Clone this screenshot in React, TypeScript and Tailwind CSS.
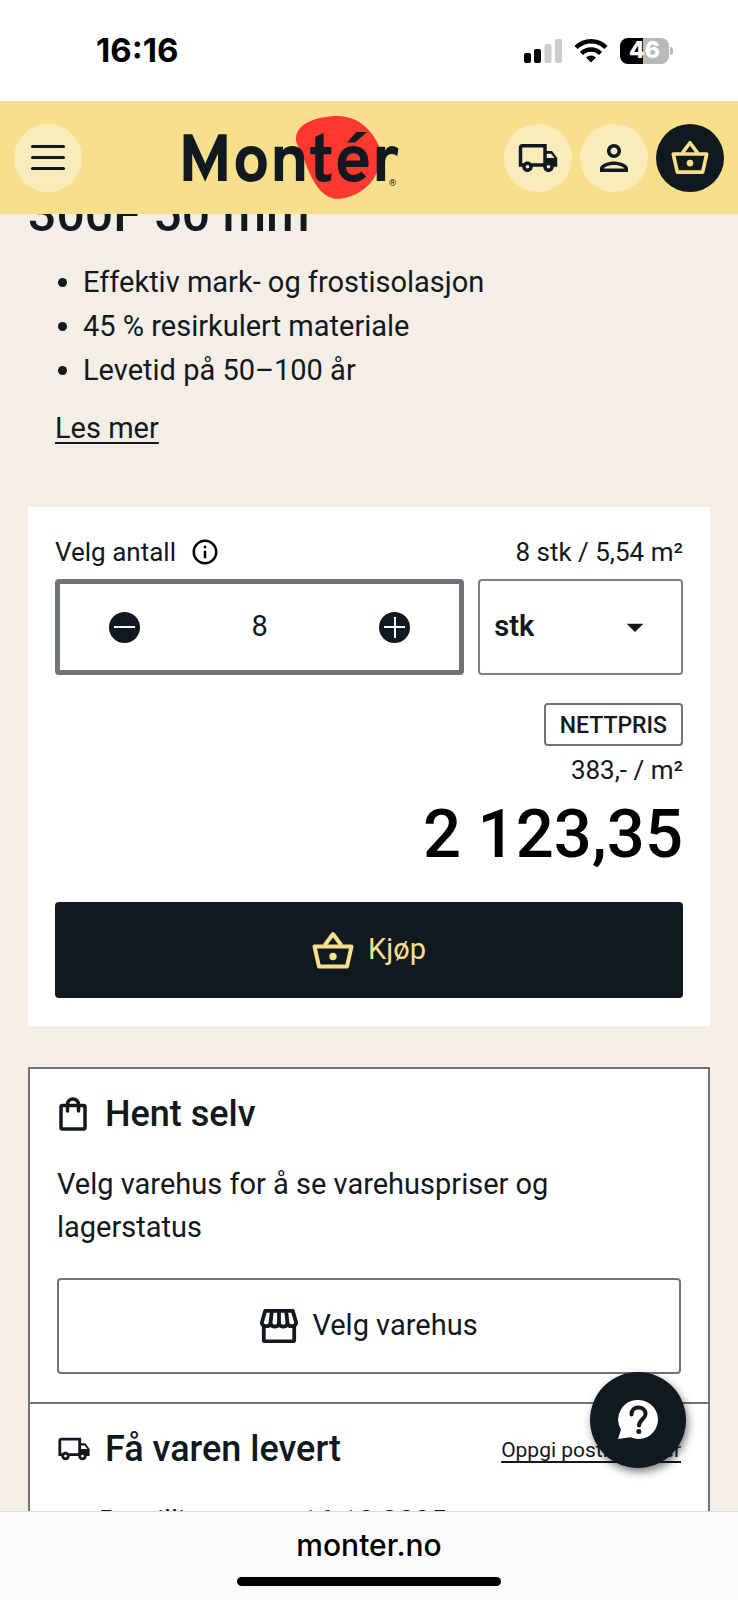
import React, { useState } from 'react';
import {
  MdOutlineLocalShipping,
  MdOutlinePerson,
  MdInfoOutline,
  MdArrowDropDown,
} from 'react-icons/md';

type IconProps = { className?: string };

function BasketIcon({ className }: IconProps) {
  return (
    <svg viewBox="0 0 42 38" fill="none" stroke="currentColor" strokeWidth="4" strokeLinejoin="round" className={className}>
      <path d="M2.5 15.5h37l-4.5 20h-28z" />
      <path d="M12.5 14.5L21 3l8.500 11.500" />
      <circle cx="21" cy="25.500" r="3.700" fill="currentColor" stroke="none" />
    </svg>
  );
}

function BagIcon({ className }: IconProps) {
  return (
    <svg viewBox="0 0 28 34" fill="none" stroke="currentColor" strokeWidth="3.500" strokeLinejoin="round" strokeLinecap="round" className={className}>
      <rect x="2" y="8.500" width="24" height="23.500" rx="1.500" />
      <path d="M8.500 14V7.500a5.500 5.500 0 0 1 11 0V14" />
    </svg>
  );
}

function StoreIcon({ className }: IconProps) {
  return (
    <svg viewBox="0 0 40 36" fill="none" stroke="currentColor" strokeWidth="4" strokeLinejoin="round" className={className}>
      <path d="M5.500 2h29l3.500 12c.5 4-7 6-9 1.500-1.500 4-7.500 4-9 0-1.500 4-7.500 4-9 0C9 20 1.500 18 2 14z" />
      <path d="M12.500 2L11 15M20 2v13M27.500 2L29 15" />
      <path d="M4 18v15a1 1 0 0 0 1 1h30a1 1 0 0 0 1-1V18" />
    </svg>
  );
}

function Logo() {
  return (
    <a href="#" aria-label="Montér" className="relative block w-[218px] pt-[14px]">
      <svg viewBox="0 0 218 84" className="absolute inset-x-0 top-0 w-full" aria-hidden="true">
        <path
          d="M118 21C120 6 141 0 160 0c20 0 34 14 41 30 5 13-2 34-15 43-9 7-25 13-35 8-14-7-22-28-27-44-3-6-7-10-6-16z"
          fill="#ff3830"
        />
      </svg>
      <span className="relative block font-[Overpass,'Open_Sans',sans-serif] text-[67px] leading-[70px] font-bold">
        Montér
      </span>
      <span className="absolute right-0 bottom-3 font-[Roboto,sans-serif] text-[9px] leading-none">®</span>
    </a>
  );
}

function StatusBar() {
  return (
    <div className="flex h-[101px] items-center justify-between bg-white pr-[65px] pl-24 font-[Inter,sans-serif] text-black">
      <span className="text-[33px] font-bold">16:16</span>
      <div className="flex items-center gap-3">
        <svg viewBox="0 0 38 24" className="h-6 w-[38px]">
          <rect x="0" y="14" width="7" height="10" rx="2" />
          <rect x="10" y="10" width="7" height="14" rx="2" />
          <rect x="20.500" y="5" width="7" height="19" rx="2" fill="#cccccc" />
          <rect x="31" y="0" width="7" height="24" rx="2" fill="#cccccc" />
        </svg>
        <svg viewBox="0 0 34 25" fill="none" stroke="#000" strokeWidth="4.500" className="h-[25px] w-[34px]">
          <path d="M2 9.500a21 21 0 0 1 30 0" />
          <path d="M7.500 15.500a13.500 13.500 0 0 1 19 0" />
          <path d="M17 24.500l-5-5a7.500 7.500 0 0 1 10 0z" fill="#000" stroke="none" />
        </svg>
        <div className="flex items-center gap-px">
          <div className="flex h-[26px] w-[49px] items-center justify-center rounded-lg bg-linear-to-r from-black from-46% to-[#b8b8b8] to-46% text-[23px] leading-none font-extrabold text-white">
            46
          </div>
          <div className="h-2 w-[3px] rounded-r-full bg-[#b8b8b8]" />
        </div>
      </div>
    </div>
  );
}

function Header() {
  return (
    <header className="flex h-[113px] items-center justify-between bg-[#f8df8b] px-[14px]">
      <button type="button" aria-label="Meny" className="flex size-[68px] flex-col items-center justify-center gap-2 rounded-full bg-[#faebbb]">
        <span className="h-[3px] w-[34px] rounded-full bg-[#101820]" />
        <span className="h-[3px] w-[34px] rounded-full bg-[#101820]" />
        <span className="h-[3px] w-[34px] rounded-full bg-[#101820]" />
      </button>
      <div className="ml-24 flex-1">
        <Logo />
      </div>
      <nav className="flex gap-2">
        <a href="#" aria-label="Levering" className="flex size-[68px] items-center justify-center rounded-full bg-[#faebbb]">
          <MdOutlineLocalShipping className="size-[42px]" />
        </a>
        <a href="#" aria-label="Min side" className="flex size-[68px] items-center justify-center rounded-full bg-[#faebbb]">
          <MdOutlinePerson className="size-[42px]" />
        </a>
        <a href="#" aria-label="Handlekurv" className="flex size-[68px] items-center justify-center rounded-full bg-[#101820] text-[#f8df8b]">
          <BasketIcon className="w-[38px]" />
        </a>
      </nav>
    </header>
  );
}

const features = [
  'Effektiv mark- og frostisolasjon',
  '45 % resirkulert materiale',
  'Levetid på 50–100 år',
];

function BuyBox() {
  const [amount, setAmount] = useState(8);

  return (
    <section className="mt-[57px] bg-white px-[27px] pt-6 pb-7">
      <div className="flex h-12 items-center justify-between pb-[6px] text-[26px]">
        <div className="flex items-center gap-[14px]">
          <label htmlFor="amount">Velg antall</label>
          <MdInfoOutline className="size-[30px] text-black" />
        </div>
        <span>8 stk / 5,54 m²</span>
      </div>

      <div className="grid grid-cols-[2fr_1fr] gap-[14px]">
        <div className="flex h-24 items-center justify-between rounded border-[5px] border-[#6f7479] px-[49px]">
          <button
            type="button"
            aria-label="Færre"
            onClick={() => setAmount((a) => Math.max(0, a - 1))}
            className="flex size-[31px] items-center justify-center rounded-full bg-[#101820]"
          >
            <span className="h-[2px] w-[21px] bg-white" />
          </button>
          <input
            id="amount"
            value={amount}
            onChange={(e) => setAmount(Number(e.target.value) || 0)}
            className="w-24 text-center text-[29px] outline-none"
          />
          <button
            type="button"
            aria-label="Flere"
            onClick={() => setAmount((a) => a + 1)}
            className="grid size-[31px] place-content-center place-items-center rounded-full bg-[#101820]"
          >
            <span className="col-start-1 row-start-1 h-[2px] w-[21px] bg-white" />
            <span className="col-start-1 row-start-1 h-[21px] w-[2px] bg-white" />
          </button>
        </div>
        <div className="relative">
          <select
            aria-label="Enhet"
            className="h-24 w-full appearance-none rounded border-2 border-[#7d8186] px-[14px] text-[29px] font-semibold outline-none"
          >
            <option>stk</option>
            <option>m²</option>
          </select>
          <MdArrowDropDown className="pointer-events-none absolute top-7 right-7 size-10" />
        </div>
      </div>

      <div className="mt-7 flex flex-col items-end">
        <span className="flex h-[43px] items-center rounded border-2 border-[#6f7479] px-[14px] pt-1 text-[23px] font-medium">
          NETTPRIS
        </span>
        <span className="text-[26px] leading-[48px]">383,- / m²</span>
        <span className="text-[67px] leading-[80px] font-medium text-black">2 123,35</span>
      </div>

      <button
        type="button"
        className="mt-7 flex h-24 w-full items-center justify-center gap-[14px] rounded bg-[#101820] text-[29px] text-[#f8df8b]"
      >
        <BasketIcon className="w-[42px]" />
        Kjøp
      </button>
    </section>
  );
}

function Delivery() {
  return (
    <section className="mt-[41px] border-2 border-[#6f7479] bg-white">
      <div className="border-b-2 border-[#6f7479] px-[27px] pt-5 pb-7">
        <h2 className="flex h-[50px] items-center gap-4 text-[36px] font-medium">
          <span className="flex w-8 justify-center">
            <BagIcon className="w-7" />
          </span>
          Hent selv
        </h2>
        <p className="mt-6 text-[29px] leading-[43px]">
          Velg varehus for å se varehuspriser og
          <br />
          lagerstatus
        </p>
        <button
          type="button"
          className="mt-[29px] flex h-24 w-full items-center justify-center gap-[14px] rounded border-2 border-[#6f7479] text-[29px]"
        >
          <StoreIcon className="w-[38px]" />
          Velg varehus
        </button>
      </div>

      <div className="px-[27px] pt-5">
        <div className="flex h-[50px] items-center justify-between">
          <h2 className="flex items-center gap-[14px] text-[36px] font-medium">
            <MdOutlineLocalShipping className="size-[34px]" />
            Få varen levert
          </h2>
          <a href="#" className="pt-1 text-[21px] underline underline-offset-4">
            Oppgi postnummer
          </a>
        </div>
        <p className="mt-[26px] pl-[42px] text-[29px] leading-[43px]">Bestillingsvare: 16.10.2025</p>
      </div>
    </section>
  );
}

export default function App() {
  return (
    <div className="flex h-screen flex-col overflow-hidden bg-[#f5eee7] font-[Roboto,sans-serif] text-[#101820]">
      <StatusBar />
      <Header />

      <main className="relative min-h-0 flex-1 overflow-hidden px-7">
        <h1 className="-mt-6 text-[50px] leading-[48px] font-medium">300F 50 mm</h1>
        <ul className="mt-[22px] list-disc pl-[55px] text-[29px] leading-[44px]">
          {features.map((feature) => (
            <li key={feature}>{feature}</li>
          ))}
        </ul>
        <a href="#" className="mt-[14px] ml-[27px] inline-block text-[29px] leading-[44px] underline underline-offset-4">
          Les mer
        </a>

        <BuyBox />
        <Delivery />

        <button
          type="button"
          aria-label="Hjelp"
          className="absolute right-[52px] bottom-[43px] flex size-24 items-center justify-center rounded-full bg-[#101820] shadow-[2px_4px_8px_rgba(0,0,0,0.5)]"
        >
          <svg viewBox="0 0 42 40" className="w-[42px]">
            <path d="M21.500 0a19.500 19.500 0 1 1-8 37.300L1 39l3-9.500A19.500 19.500 0 0 1 21.500 0z" fill="#fff" />
            <path d="M14.500 14.500c0-4.500 3-7 7-7s7 2.500 7 6.500c0 5-6.500 5.500-6.500 11.500" fill="none" stroke="#101820" strokeWidth="4" strokeLinecap="round" />
            <circle cx="21.800" cy="31.500" r="2.500" fill="#101820" />
          </svg>
        </button>
      </main>

      <footer className="flex h-[89px] flex-col items-center border-t border-[#dedbdc] bg-[#fbfafc] pt-3 font-[Inter,sans-serif] text-black">
        <a href="#" className="text-[30px] leading-[42px] font-medium">
          monter.no
        </a>
        <div className="mt-[11px] h-[9px] w-[264px] rounded-full bg-black" />
      </footer>
    </div>
  );
}
